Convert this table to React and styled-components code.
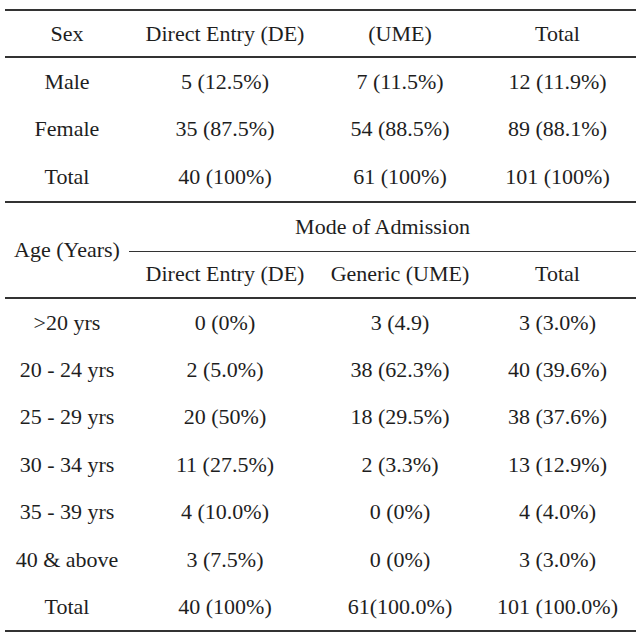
import React from "react";
import styled, { createGlobalStyle } from "styled-components";

const GlobalStyle = createGlobalStyle`
  html, body {
    margin: 0;
    padding: 0;
    background: #fff;
  }
`;

const Page = styled.div`
  width: 640px;
  height: 638px;
  padding: 9px 0 0 5px;
  box-sizing: border-box;
  background: #fff;
`;

const Table = styled.table`
  width: 631px;
  border-collapse: collapse;
  table-layout: fixed;
  font-family: "Liberation Serif", "Times New Roman", serif;
  font-size: 22px;
  color: #1e1e1e;
  border-top: ${(p) => (p.$top ? "2px solid #333" : "none")};
  border-bottom: 2px solid #333;
`;

const HeadRow = styled.tr`
  height: ${(p) => p.$h}px;
  border-bottom: ${(p) => p.$line || "none"};
`;

const Row = styled.tr`
  height: ${(p) => p.$h}px;
`;

const HeadCell = styled.th`
  font: inherit;
  text-align: center;
  vertical-align: middle;
  padding: 0;
  white-space: nowrap;
  border-bottom: ${(p) => (p.$rule ? "1px solid #333" : "none")};
`;

const Cell = styled.td`
  font: inherit;
  text-align: center;
  vertical-align: middle;
  padding: 0;
  white-space: nowrap;
`;

const cols = [124, 192, 158, 157];

const Cols = () => (
  <colgroup>
    {cols.map((w, i) => (
      <col key={i} style={{ width: w }} />
    ))}
  </colgroup>
);

const sexRows = [
  ["Male", "5 (12.5%)", "7 (11.5%)", "12 (11.9%)"],
  ["Female", "35 (87.5%)", "54 (88.5%)", "89 (88.1%)"],
  ["Total", "40 (100%)", "61 (100%)", "101 (100%)"],
];

const ageRows = [
  [">20 yrs", "0 (0%)", "3 (4.9)", "3 (3.0%)"],
  ["20 - 24 yrs", "2 (5.0%)", "38 (62.3%)", "40 (39.6%)"],
  ["25 - 29 yrs", "20 (50%)", "18 (29.5%)", "38 (37.6%)"],
  ["30 - 34 yrs", "11 (27.5%)", "2 (3.3%)", "13 (12.9%)"],
  ["35 - 39 yrs", "4 (10.0%)", "0 (0%)", "4 (4.0%)"],
  ["40 & above", "3 (7.5%)", "0 (0%)", "3 (3.0%)"],
  ["Total", "40 (100%)", "61(100.0%)", "101 (100.0%)"],
];

export default function App() {
  return (
    <>
      <GlobalStyle />
      <Page>
        <Table $top>
          <Cols />
          <thead>
            <HeadRow $h={47} $line="2px solid #333">
              <HeadCell>Sex</HeadCell>
              <HeadCell>Direct Entry (DE)</HeadCell>
              <HeadCell>(UME)</HeadCell>
              <HeadCell>Total</HeadCell>
            </HeadRow>
          </thead>
          <tbody>
            {sexRows.map((r, k) => (
              <Row key={r[0]} $h={k === 2 ? 49 : 48}>
                {r.map((c, i) => (
                  <Cell key={i}>{c}</Cell>
                ))}
              </Row>
            ))}
          </tbody>
        </Table>

        <Table>
          <Cols />
          <thead>
            <HeadRow $h={48}>
              <HeadCell rowSpan={2}>Age (Years)</HeadCell>
              <HeadCell colSpan={3} $rule>
                Mode of Admission
              </HeadCell>
            </HeadRow>
            <HeadRow $h={47} $line="2px solid #333">
              <HeadCell>Direct Entry (DE)</HeadCell>
              <HeadCell>Generic (UME)</HeadCell>
              <HeadCell>Total</HeadCell>
            </HeadRow>
          </thead>
          <tbody>
            {ageRows.map((r, k) => (
              <Row key={k} $h={k % 2 ? 47 : 48}>
                {r.map((c, i) => (
                  <Cell key={i}>{c}</Cell>
                ))}
              </Row>
            ))}
          </tbody>
        </Table>
      </Page>
    </>
  );
}
